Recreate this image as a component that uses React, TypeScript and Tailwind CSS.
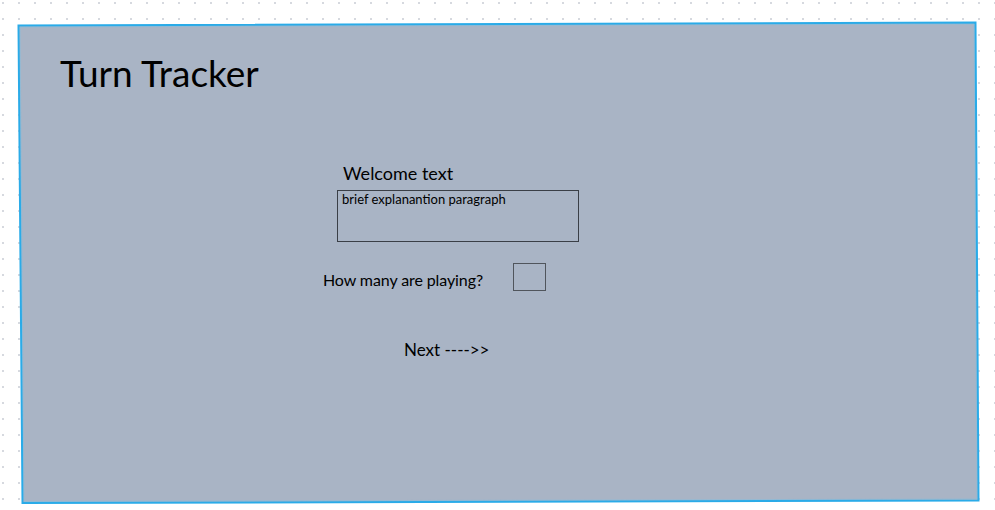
import React from "react";

export default function App() {
  return (
    <div
      className="relative w-[995px] h-[510px] overflow-hidden bg-white bg-[radial-gradient(circle,#d6d9df_0.8px,transparent_1.3px)] bg-[length:16px_16px] bg-[position:-5px_-5px]"
      style={{ fontFamily: "Lato, 'Liberation Sans', sans-serif" }}
    >
      <svg className="absolute inset-0" width="995" height="510" viewBox="0 0 995 510">
        <polygon points="18.5,25.5 975.5,22.5 978.5,500.5 22.5,503" fill="#a9b4c5" stroke="#2aabe8" strokeWidth="2" />
        <polygon points="20,27 974,24 977,499 24,501.5" fill="none" stroke="#6cc3ee" strokeWidth="0.6" opacity="0.6" />
      </svg>

      <div className="relative flex flex-col text-black">
        <h1 className="pt-[51px] pl-[60px] text-[37px] leading-[44px] font-normal">Turn Tracker</h1>

        <div className="mt-[67px] pl-[337px] flex flex-col">
          <div className="pl-[6px] text-[18px] leading-[22px]">Welcome text</div>
          <div className="mt-[6px] w-[242px] h-[52px] border border-[#3a3f47] px-[4px] pt-[1px] text-[13px] leading-[15px]">
            brief explanantion paragraph
          </div>
        </div>

        <div className="mt-[21px] pl-[323px] flex items-center">
          <span className="text-[16px] leading-[18px] pt-[6px] tracking-[-0.1px]">How many are playing?</span>
          <div className="ml-[30px] w-[33px] h-[28px] border border-[#50555c]" />
        </div>

        <div className="mt-[49px] pl-[404px] text-[17px] leading-[20px]">Next ----&gt;&gt;</div>
      </div>
    </div>
  );
}
